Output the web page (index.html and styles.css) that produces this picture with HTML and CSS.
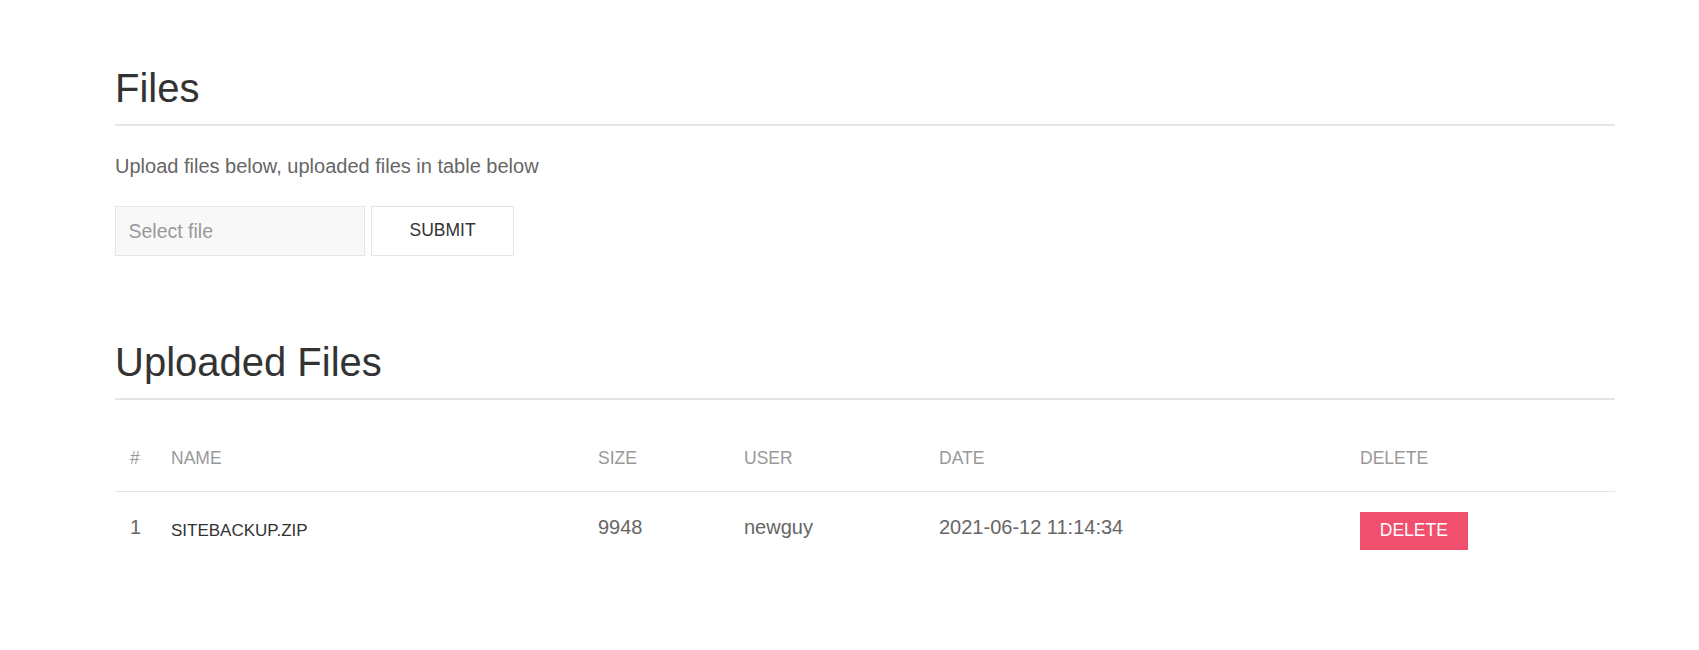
FILE: index.html
```html
<!DOCTYPE html>
<html lang="en">
<head>
<meta charset="utf-8">
<title>Files</title>
<link rel="stylesheet" href="styles.css">
</head>
<body>
<div class="page">
  <div class="container">
    <section class="section">
      <h2 class="heading-divider">Files</h2>
      <p class="lead">Upload files below, uploaded files in table below</p>
      <form class="upload-form">
        <div class="file-field">
          <input class="input" type="text" placeholder="Select file" readonly>
        </div>
        <button class="button button-default" type="button">Submit</button>
      </form>
    </section>

    <section class="section section-uploaded">
      <h2 class="heading-divider">Uploaded Files</h2>
      <table class="table">
        <colgroup>
          <col class="col-num">
          <col class="col-name">
          <col class="col-size">
          <col class="col-user">
          <col class="col-date">
          <col class="col-del">
        </colgroup>
        <thead>
          <tr>
            <th>#</th>
            <th>Name</th>
            <th>Size</th>
            <th>User</th>
            <th>Date</th>
            <th>Delete</th>
          </tr>
        </thead>
        <tbody>
          <tr>
            <td>1</td>
            <td><span class="filename">sitebackup.zip</span></td>
            <td>9948</td>
            <td>newguy</td>
            <td>2021-06-12 11:14:34</td>
            <td><button class="button button-danger button-small" type="button">Delete</button></td>
          </tr>
        </tbody>
      </table>
    </section>
  </div>
</div>
</body>
</html>
```

FILE: styles.css
```css
* {
  box-sizing: border-box;
}

html, body {
  margin: 0;
  padding: 0;
  background: #fff;
}

body {
  font-family: "Liberation Sans", Arial, Helvetica, sans-serif;
  font-size: 20px;
  line-height: 1.5;
  color: #666;
}

.page {
  padding: 62px 0 0 115px;
}

.container {
  width: 1500px;
}

.heading-divider {
  margin: 0;
  font-size: 40px;
  line-height: 52px;
  font-weight: 400;
  color: #333;
  padding-bottom: 10px;
  border-bottom: 2px solid #e5e5e5;
}

.lead {
  margin: 25px 0 0;
  font-size: 20px;
  line-height: 30px;
  color: #666;
}

.upload-form {
  margin-top: 25px;
  display: flex;
  gap: 6px;
  align-items: flex-start;
}

.file-field {
  width: 250px;
}

.input {
  display: block;
  width: 250px;
  height: 50px;
  margin: 0;
  padding: 0 12.5px;
  background: #f8f8f8;
  border: 1px solid #e5e5e5;
  border-radius: 0;
  font-family: inherit;
  font-size: 19.5px;
  color: #666;
  outline: none;
}

.input::placeholder {
  color: #999;
  opacity: 1;
}

.button {
  margin: 0;
  border: 1px solid transparent;
  border-radius: 0;
  font-family: inherit;
  font-size: 17.5px;
  text-transform: uppercase;
  cursor: pointer;
  display: inline-block;
}

.button-default {
  height: 50px;
  line-height: 47.5px;
  padding: 0 37.5px;
  background: transparent;
  color: #333;
  border-color: #e5e5e5;
}

.button-danger {
  background: #f0506e;
  color: #fff;
}

.button-small {
  height: 37.5px;
  line-height: 35.5px;
  padding: 0 18.75px;
}

.section-uploaded {
  margin-top: 80px;
}

.table {
  margin-top: 25px;
  width: 1500px;
  border-collapse: collapse;
  border-spacing: 0;
  table-layout: fixed;
}

.col-num { width: 41px; }
.col-name { width: 427px; }
.col-size { width: 146px; }
.col-user { width: 195px; }
.col-date { width: 421px; }
.col-del { width: 270px; }

.table th {
  padding: 20px 15px;
  text-align: left;
  vertical-align: bottom;
  font-size: 17.5px;
  line-height: 26.25px;
  font-weight: 400;
  color: #999;
  text-transform: uppercase;
}

.table td {
  padding: 20px 15px;
  vertical-align: top;
  font-size: 20px;
  line-height: 30px;
  color: #666;
}

.table tbody tr {
  border-top: 1px solid #e5e5e5;
}

.filename {
  font-size: 17px;
  color: #333;
  text-transform: uppercase;
  vertical-align: -2px;
}
```
